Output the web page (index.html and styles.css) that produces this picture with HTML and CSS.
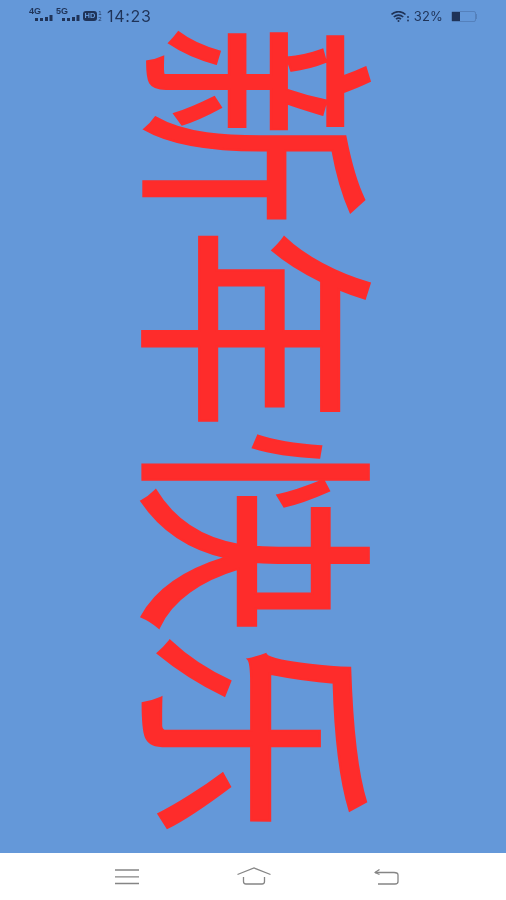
FILE: index.html
```html
<!DOCTYPE html>
<html lang="zh">
<head>
<meta charset="utf-8">
<title>新年快乐</title>
<link rel="stylesheet" href="styles.css">
</head>
<body>
<div class="screen">
  <main class="poster">
    <header class="status">
      <div class="status-left">
        <div class="net">
          <span class="net-label">4G</span>
          <svg class="bars" width="18" height="6" viewBox="0 0 18 6"><rect x="0" y="3" width="3" height="3"/><rect x="5" y="3" width="3" height="3"/><rect x="10" y="2" width="3" height="4"/><rect x="14.500" y="0" width="3" height="6"/></svg>
        </div>
        <div class="net">
          <span class="net-label">5G</span>
          <svg class="bars" width="18" height="6" viewBox="0 0 18 6"><rect x="0" y="3" width="3" height="3"/><rect x="5" y="3" width="3" height="3"/><rect x="10" y="2" width="3" height="4"/><rect x="14.500" y="0" width="3" height="6"/></svg>
        </div>
        <span class="hd">HD</span>
        <span class="sims"><span>1</span><span>2</span></span>
        <span class="time">14:23</span>
      </div>
      <div class="status-right">
        <svg class="wifi" width="18" height="11" viewBox="0 0 18 11" fill="none" stroke="#1f3358" stroke-width="1.600"><path d="M.5 3.500C4.500-.3 10.500-.3 14.500 3.500"/><path d="M2.800 6C5.400 3.500 9.600 3.500 12.200 6"/><path d="M5 8.200C6.400 7 8.600 7 10 8.200"/><circle cx="7.500" cy="10" r="1" fill="#1f3358" stroke="none"/><circle cx="17" cy="6" r=".9" fill="#1f3358" stroke="none"/><circle cx="17" cy="9.500" r=".9" fill="#1f3358" stroke="none"/></svg>
        <span class="pct">32%</span>
        <div class="battery"><div class="battery-fill"></div></div>
      </div>
    </header>
    <h1 class="greeting">新年快乐</h1>
  </main>
  <nav class="navbar">
    <svg width="24" height="16" viewBox="0 0 24 16" stroke="#858585" stroke-width="1.300" fill="none"><path d="M0 1H24M0 7.800H24M0 14.500H24"/></svg>
    <svg class="nav-home" width="34" height="18" viewBox="0 0 34 18" stroke="#858585" stroke-width="1.300" fill="none"><path d="M.5 7.500 17 1 33.500 7.500"/><path d="M6.500 10V14.500Q6.500 17 9 17H25Q27.500 17 27.500 14.500V10"/></svg>
    <svg class="nav-back" width="25" height="16" viewBox="0 0 25 16" stroke="#858585" stroke-width="1.300" fill="none"><path d="M1 3.500H20Q24 3.500 24 6V12.500Q24 15 21 15H4"/><path d="M5.500 .5 1 3.500 5.500 5.500" stroke-linejoin="round"/></svg>
  </nav>
</div>
</body>
</html>
```
FILE: styles.css
```css
* { box-sizing: border-box; }
html, body { margin: 0; padding: 0; }
body { width: 506px; height: 900px; overflow: hidden; font-family: "Liberation Sans", Arial, sans-serif; }
.screen { display: flex; flex-direction: column; width: 506px; height: 900px; }
.poster { position: relative; flex: 1; display: flex; align-items: center; justify-content: center; background: #6498d9; overflow: hidden; }
.status { position: absolute; top: 0; left: 0; right: 0; height: 32px; padding: 8px 30px 0 29px; display: flex; justify-content: space-between; color: #1f3358; filter: blur(.3px); }
.status-left, .status-right { display: flex; align-items: flex-start; }
.net { position: relative; width: 27px; height: 14px; }
.net-label { position: absolute; left: 0; top: -1px; font-size: 9px; font-weight: 700; line-height: 9px; }
.bars { position: absolute; left: 6px; top: 7px; fill: #1f3358; }
.hd { margin-top: 3px; width: 14px; height: 10px; border-radius: 3px; background: #1f3358; color: #6498d9; font-size: 7.500px; font-weight: 700; line-height: 10px; text-align: center; }
.sims { display: flex; flex-direction: column; align-items: center; width: 6px; margin-top: 2px; font-size: 6px; line-height: 6px; }
.time { margin-left: 4px; font-family: Inter, sans-serif; font-size: 16px; line-height: 16px; letter-spacing: .7px; }
.status-right { align-items: center; height: 16px; }
.wifi { margin-right: 5px; }
.pct { font-family: Inter, sans-serif; font-size: 13px; letter-spacing: .2px; line-height: 16px; margin-right: 8px; }
.battery { position: relative; width: 25px; height: 11px; border: 1px solid rgba(31,51,88,.22); border-radius: 2px; }
.battery::after { content: ""; position: absolute; right: -2px; top: 2px; width: 1px; height: 5px; background: rgba(31,51,88,.22); }
.battery-fill { width: 8px; height: 100%; background: #1f3358; }
.greeting { margin: 0; margin-top: 7px; writing-mode: vertical-rl; text-orientation: sideways; font-family: "Noto Sans CJK SC", sans-serif; font-size: 203px; font-weight: 400; line-height: 1; color: #fe2c2b; -webkit-text-stroke: 2px #fe2c2b; transform: translateX(16px) scaleX(1.21); white-space: nowrap; }
.navbar { flex: none; height: 47px; padding-left: 115px; display: flex; align-items: center; background: #fff; }
.nav-home { margin-left: 98px; margin-top: -1px; }
.nav-back { margin-left: 103px; }
```
